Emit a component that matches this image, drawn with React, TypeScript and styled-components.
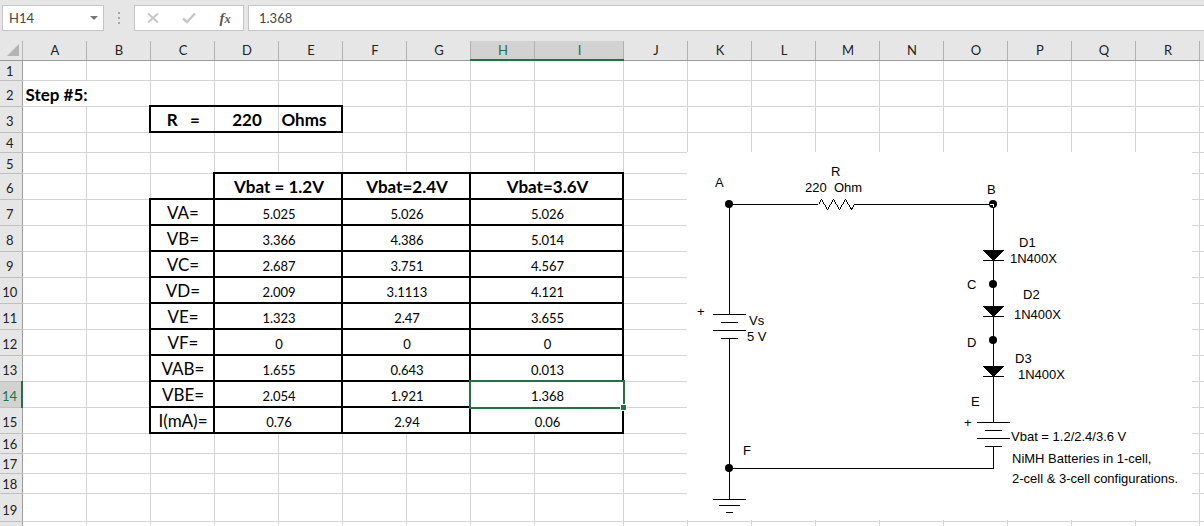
import React from "react";
import styled, { createGlobalStyle, css } from "styled-components";

const GREEN = "#217346";
const GRID = "#d4d4d4";

const GlobalStyle = createGlobalStyle`
  *, *::before, *::after { box-sizing: border-box; }
  body {
    margin: 0;
    background: #fff;
    color: #000;
    font-family: Lato, "Noto Sans", sans-serif;
    font-size: 13px;
  }
`;

const Workbook = styled.main`
  display: flex;
  flex-direction: column;
  height: 100vh;
  overflow: hidden;
`;

const FormulaBar = styled.div`
  display: flex;
  flex: none;
  gap: 4px;
  padding: 5px 0 10px 2px;
  background: #e6e6e6;
`;

const Field = styled.label`
  display: flex;
  align-items: center;
  height: 26px;
  border: 1px solid #c6c6c6;
  background: #fff;
`;

const NameField = styled(Field)`
  width: 102px;
  padding-right: 5px;
`;

const FormulaField = styled(Field)`
  flex: 1;
  border-right: 0;
`;

const TextInput = styled.input<{ $indent: number }>`
  flex: 1;
  min-width: 0;
  padding: 0 0 0 ${(p) => p.$indent}px;
  border: 0;
  outline: 0;
  background: transparent;
  color: #444;
  font: inherit;
`;

const Grip = styled.div`
  display: flex;
  flex-direction: column;
  justify-content: center;
  align-items: center;
  gap: 3px;
  width: 22px;
`;

const GripDot = styled.span`
  width: 2px;
  height: 2px;
  background: #a6a6a6;
`;

const Commands = styled.div`
  display: flex;
  width: 110px;
  border: 1px solid #c6c6c6;
  background: #fff;
`;

const CommandButton = styled.button`
  display: flex;
  flex: 1;
  align-items: center;
  justify-content: center;
  padding: 0;
  border: 0;
  background: transparent;
  color: #595959;
  font: italic bold 15px "Liberation Serif", serif;
`;

const SheetArea = styled.div`
  position: relative;
  flex: 1;
  min-height: 0;
  overflow: hidden;
`;

const Grid = styled.table`
  width: 1263px;
  table-layout: fixed;
  border-collapse: collapse;
`;

const Row = styled.tr<{ $height: number }>`
  height: ${(p) => p.$height}px;
`;

const Corner = styled.td`
  padding: 0 3px 4px 0;
  border-right: 1px solid #b5b5b5;
  border-bottom: 1px solid #9b9b9b;
  background: #e6e6e6;
  text-align: right;
  vertical-align: bottom;
  line-height: 0;
`;

const ColumnHeader = styled.th<{ $active: boolean }>`
  padding: 0 0 0 2px;
  border-right: 1px solid #b1b1b1;
  border-bottom: ${(p) => (p.$active ? `2px solid ${GREEN}` : "1px solid #9b9b9b")};
  background: ${(p) => (p.$active ? "#d2d2d2" : "#e6e6e6")};
  color: ${(p) => (p.$active ? GREEN : "#222")};
  font-weight: 400;
  line-height: 16px;
`;

const RowHeader = styled.th<{ $active: boolean; $tall: boolean }>`
  padding: 0 2px ${(p) => (p.$tall ? 2 : 0)}px 0;
  border-right: ${(p) => (p.$active ? `2px solid ${GREEN}` : "1px solid #9b9b9b")};
  border-bottom: 1px solid #c0c0c0;
  background: ${(p) => (p.$active ? "#d2d2d2" : "#e6e6e6")};
  color: ${(p) => (p.$active ? GREEN : "#222")};
  font-weight: 400;
  line-height: 18px;
  vertical-align: bottom;
`;

type Kind = "value" | "label" | "title";

const Cell = styled.td<{ $kind: Kind; $edges: string; $align: string; $active: boolean }>`
  position: relative;
  padding: 0 0 0 ${(p) => (p.$align === "left" ? 3 : 2)}px;
  border: 1px solid ${GRID};
  text-align: ${(p) => p.$align};
  vertical-align: bottom;
  white-space: pre;
  font-size: ${(p) => (p.$kind === "value" ? 13 : 17)}px;
  font-weight: ${(p) => (p.$kind === "title" ? 700 : 400)};
  line-height: ${(p) => (p.$kind === "value" ? 20 : 22)}px;
  ${(p) => p.$edges.includes("t") && "border-top: 2px solid #000;"}
  ${(p) => p.$edges.includes("r") && "border-right: 2px solid #000;"}
  ${(p) => p.$edges.includes("b") && "border-bottom: 2px solid #000;"}
  ${(p) => p.$edges.includes("l") && "border-left: 2px solid #000;"}
  ${(p) =>
    p.$active &&
    css`
      &::after {
        content: "";
        position: absolute;
        inset: -2px -3px -3px -2px;
        border: 2px solid ${GREEN};
        box-shadow: inset 0 0 0 1px #fff;
      }
    `}
`;

const FillHandle = styled.span`
  position: absolute;
  z-index: 1;
  right: -5px;
  bottom: -5px;
  width: 7px;
  height: 7px;
  border: 1px solid #fff;
  background: ${GREEN};
`;

const Schematic = styled.svg`
  position: absolute;
  left: 687px;
  top: 111px;
  background: #fff;
  font-family: "Liberation Sans", Arial, sans-serif;
  font-size: 13px;
`;

const COLUMNS = "ABCDEFGHIJKLMNOPQR".split("");

const ROW_HEIGHTS = [20, 26, 26, 20, 21, 26, 26, 26, 26, 26, 26, 26, 26, 26, 26, 20, 20, 20, 28, 20];

interface CellData {
  text: string;
  span?: number;
  kind?: Kind;
  edges?: string;
  align?: string;
}

const READINGS: [string, string, string, string][] = [
  ["VA=", "5.025", "5.026", "5.026"],
  ["VB=", "3.366", "4.386", "5.014"],
  ["VC=", "2.687", "3.751", "4.567"],
  ["VD=", "2.009", "3.1113", "4.121"],
  ["VE=", "1.323", "2.47", "3.655"],
  ["VF=", "0", "0", "0"],
  ["VAB=", "1.655", "0.643", "0.013"],
  ["VBE=", "2.054", "1.921", "1.368"],
  ["I(mA)=", "0.76", "2.94", "0.06"],
];

const CELLS: Record<string, CellData> = {
  A2: { text: "Step #5:", span: 2, kind: "title", align: "left" },
  C3: { text: "R   =", kind: "title", edges: "tbl" },
  D3: { text: "220", kind: "title", edges: "tb" },
  E3: { text: "Ohms", kind: "title", edges: "tbr", align: "left" },
  D6: { text: "Vbat = 1.2V", span: 2, kind: "title", edges: "trbl" },
  F6: { text: "Vbat=2.4V", span: 2, kind: "title", edges: "trbl" },
  H6: { text: "Vbat=3.6V", span: 2, kind: "title", edges: "trbl" },
};

READINGS.forEach(([label, low, mid, high], i) => {
  const row = i + 7;
  CELLS[`C${row}`] = { text: label, kind: "label", edges: "trbl" };
  CELLS[`D${row}`] = { text: low, span: 2, edges: "trbl" };
  CELLS[`F${row}`] = { text: mid, span: 2, edges: "trbl" };
  CELLS[`H${row}`] = { text: high, span: 2, edges: "trbl" };
});

const ACTIVE = "H14";

function rowCells(row: number) {
  const out: React.ReactNode[] = [];
  for (let c = 0; c <= COLUMNS.length; ) {
    const ref = `${COLUMNS[c] ?? "S"}${row}`;
    const data = CELLS[ref];
    const span = data?.span ?? 1;
    out.push(
      <Cell
        key={ref}
        colSpan={span}
        $kind={data?.kind ?? "value"}
        $edges={data?.edges ?? ""}
        $align={data?.align ?? "center"}
        $active={ref === ACTIVE}
      >
        {data?.text}
        {ref === ACTIVE && <FillHandle />}
      </Cell>
    );
    c += span;
  }
  return out;
}

const Diode = ({ y }: { y: number }) => (
  <g>
    <path d={`M296 ${y}H317L306.5 ${y + 11}Z`} fill="#000" stroke="none" />
    <path d={`M296 ${y + 10.5}H317`} />
  </g>
);

const Battery = ({ x, y }: { x: number; y: number }) => (
  <path
    d={`M${x} ${y + 0.5}h33M${x + 8} ${y + 8.5}h17M${x} ${y + 16.5}h33M${x + 8} ${y + 24.5}h17`}
  />
);

const NODES = [[42, 52], [306, 52], [306, 132], [306, 188], [42, 316]];

const LABELS: [number, number, string][] = [
  [28, 35, "A"],
  [144, 24, "R"],
  [118, 40, "220\u00a0\u00a0Ohm"],
  [300, 42, "B"],
  [332, 95, "D1"],
  [323, 111, "1N400X"],
  [280, 137, "C"],
  [336, 147, "D2"],
  [327, 167, "1N400X"],
  [280, 195, "D"],
  [328, 211, "D3"],
  [331, 227, "1N400X"],
  [284, 254, "E"],
  [277, 275, "+"],
  [324, 289, "Vbat = 1.2/2.4/3.6 V"],
  [325, 311, "NiMH Batteries in 1-cell,"],
  [325, 331, "2-cell & 3-cell configurations."],
  [10, 164, "+"],
  [62, 173, "Vs"],
  [60, 189, "5 V"],
  [56, 303, "F"],
];

function Circuit() {
  return (
    <Schematic width="505" height="368" viewBox="0 0 505 368" role="img" aria-label="Circuit schematic">
      <g fill="none" stroke="#000" shapeRendering="crispEdges">
        <path d="M42.5 162V52.5H131" />
        <path d="M131.5 52.5L134.5 47.5L140.5 57.5L146.5 47.5L152.5 57.5L158.5 47.5L164.5 57.5L167.5 52.5" />
        <path d="M167 52.5H306.5V270" />
        <path d="M306.5 294V316.5H42M42.5 186V347" />
        <path d="M26 347.5H59M32 353.5H53M39 360.5H46" />
        <Battery x={26} y={162} />
        <Battery x={290} y={270} />
        <Diode y={98} />
        <Diode y={154} />
        <Diode y={214} />
      </g>
      {NODES.map(([x, y]) => (
        <circle key={`${x}-${y}`} cx={x} cy={y} r="4" />
      ))}
      <path d="M303 52.5H306.5V55" fill="none" stroke="#fff" shapeRendering="crispEdges" />
      {LABELS.map(([x, y, text]) => (
        <text key={`${x}-${y}`} x={x} y={y}>
          {text}
        </text>
      ))}
    </Schematic>
  );
}

export default function App() {
  return (
    <Workbook>
      <GlobalStyle />
      <FormulaBar>
        <NameField>
          <TextInput aria-label="Name box" defaultValue="H14" $indent={6} />
          <svg width="8" height="5" viewBox="0 0 8 5" aria-hidden="true">
            <path d="M0 0H8L4 4Z" fill="#777" />
          </svg>
        </NameField>
        <Grip>
          <GripDot />
          <GripDot />
          <GripDot />
        </Grip>
        <Commands>
          <CommandButton aria-label="Cancel">
            <svg width="12" height="12" viewBox="0 0 12 12" aria-hidden="true">
              <path d="M1 1.5L11 10.5M11 1.5L1 10.5" stroke="#c6c6c6" strokeWidth="1.8" />
            </svg>
          </CommandButton>
          <CommandButton aria-label="Enter">
            <svg width="14" height="12" viewBox="0 0 14 12" aria-hidden="true">
              <path d="M1 6.5L5 10L13 1.5" fill="none" stroke="#c6c6c6" strokeWidth="2.4" />
            </svg>
          </CommandButton>
          <CommandButton aria-label="Insert function">
            <span>
              f<small>x</small>
            </span>
          </CommandButton>
        </Commands>
        <FormulaField>
          <TextInput aria-label="Formula bar" defaultValue="1.368" $indent={10} />
        </FormulaField>
      </FormulaBar>
      <SheetArea>
        <Grid>
          <colgroup>
            <col style={{ width: 22 }} />
            {COLUMNS.map((name) => (
              <col key={name} style={{ width: name === "I" ? 89 : 64 }} />
            ))}
            <col style={{ width: 64 }} />
          </colgroup>
          <thead>
            <Row $height={19}>
              <Corner>
                <svg width="12" height="12" viewBox="0 0 12 12" aria-hidden="true">
                  <path d="M12 0V12H0Z" fill="#b4b4b4" />
                </svg>
              </Corner>
              {COLUMNS.map((name) => (
                <ColumnHeader key={name} scope="col" $active={name === "H" || name === "I"}>
                  {name}
                </ColumnHeader>
              ))}
              <ColumnHeader $active={false} />
            </Row>
          </thead>
          <tbody>
            {ROW_HEIGHTS.map((height, i) => (
              <Row key={i} $height={height}>
                <RowHeader scope="row" $active={i === 13} $tall={height > 21}>
                  {i < 19 ? i + 1 : ""}
                </RowHeader>
                {rowCells(i + 1)}
              </Row>
            ))}
          </tbody>
        </Grid>
        <Circuit />
      </SheetArea>
    </Workbook>
  );
}
